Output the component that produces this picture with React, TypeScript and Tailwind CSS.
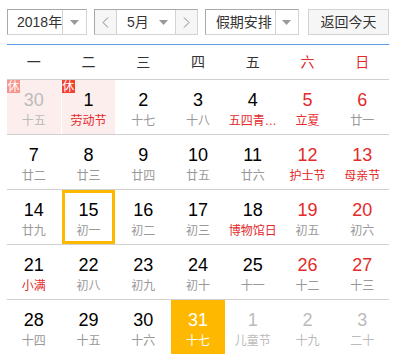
import React from 'react';

type Day = {
  n: number;
  sub: string;
  weekend?: boolean;
  festival?: boolean;
  other?: boolean;
  rest?: boolean;
  selected?: boolean;
  today?: boolean;
};

const weeks: Day[][] = [
  [
    { n: 30, sub: '十五', other: true, rest: true },
    { n: 1, sub: '劳动节', festival: true, rest: true },
    { n: 2, sub: '十七' },
    { n: 3, sub: '十八' },
    { n: 4, sub: '五四青…', festival: true },
    { n: 5, sub: '立夏', weekend: true, festival: true },
    { n: 6, sub: '廿一', weekend: true },
  ],
  [
    { n: 7, sub: '廿二' },
    { n: 8, sub: '廿三' },
    { n: 9, sub: '廿四' },
    { n: 10, sub: '廿五' },
    { n: 11, sub: '廿六' },
    { n: 12, sub: '护士节', weekend: true, festival: true },
    { n: 13, sub: '母亲节', weekend: true, festival: true },
  ],
  [
    { n: 14, sub: '廿九' },
    { n: 15, sub: '初一', selected: true },
    { n: 16, sub: '初二' },
    { n: 17, sub: '初三' },
    { n: 18, sub: '博物馆日', festival: true },
    { n: 19, sub: '初五', weekend: true },
    { n: 20, sub: '初六', weekend: true },
  ],
  [
    { n: 21, sub: '小满', festival: true },
    { n: 22, sub: '初八' },
    { n: 23, sub: '初九' },
    { n: 24, sub: '初十' },
    { n: 25, sub: '十一' },
    { n: 26, sub: '十二', weekend: true },
    { n: 27, sub: '十三', weekend: true },
  ],
  [
    { n: 28, sub: '十四' },
    { n: 29, sub: '十五' },
    { n: 30, sub: '十六' },
    { n: 31, sub: '十七', today: true },
    { n: 1, sub: '儿童节', other: true },
    { n: 2, sub: '十九', other: true },
    { n: 3, sub: '二十', other: true },
  ],
];

const Caret = () => (
  <svg width="9" height="5" viewBox="0 0 9 5" className="block shrink-0">
    <path d="M0 0h9L4.5 5z" fill="#999" />
  </svg>
);

const Chevron = ({ dir }: { dir: 'l' | 'r' }) => (
  <svg width="7" height="11" viewBox="0 0 7 11" className="block">
    <path
      d={dir === 'l' ? 'M6 0.5L1 5.5l5 5' : 'M1 0.5l5 5-5 5'}
      fill="none"
      stroke="#888"
      strokeWidth="1"
    />
  </svg>
);

const boxBorder = 'border border-t-[#a9a9a9] border-l-[#a9a9a9] border-r-[#d3d3d3] border-b-[#d3d3d3]';

function DayCell({ d }: { d: Day }) {
  let numColor = d.weekend ? 'text-[#e42a2a]' : 'text-black';
  let subColor = d.festival ? 'text-[#e42a2a]' : 'text-[#999]';
  if (d.other) {
    numColor = 'text-[#bbb]';
    subColor = 'text-[#bbb]';
  }
  if (d.today) {
    numColor = 'text-white';
    subColor = 'text-white';
  }
  const bg = d.today ? 'bg-[#ffb800]' : d.rest ? 'bg-[#fdeeee]' : 'bg-white';
  const ring = d.selected ? 'border-[3px] border-[#ffb800] pt-[7px]' : 'pt-[10px]';

  return (
    <div className={`relative h-[54px] flex flex-col items-center ${bg} ${ring}`}>
      {d.rest && (
        <span
          className={`absolute left-0 top-0 w-[13px] h-[13px] flex items-center justify-center text-[12px] leading-none text-white ${
            d.other ? 'bg-[#f7958c]' : 'bg-[#f2412f]'
          }`}
        >
          休
        </span>
      )}
      <span className={`text-[18px] leading-[20px] ${numColor}`}>{d.n}</span>
      <span className={`mt-[3px] text-[12px] leading-[16px] whitespace-nowrap ${subColor}`}>{d.sub}</span>
    </div>
  );
}

export default function App() {
  return (
    <div
      className="w-[396px] h-[359px] bg-white px-[7px] pt-[9px] text-[#333] overflow-hidden"
      style={{ fontFamily: '"Liberation Sans", "Noto Sans CJK SC", sans-serif' }}
    >
      {/* toolbar */}
      <div className="flex h-[26px] text-[14px] whitespace-nowrap">
        <div className={`flex w-[80px] bg-white ${boxBorder}`}>
          <span className="flex-1 pl-[9px] flex items-center">2018年</span>
          <span className="w-[24px] shrink-0 border-l border-[#d3d3d3] flex items-center justify-center">
            <Caret />
          </span>
        </div>

        <div className={`ml-[7px] flex w-[105px] ${boxBorder}`}>
          <span className="w-[22px] bg-[#f6f6f6] border-r border-[#d3d3d3] flex items-center justify-center">
            <Chevron dir="l" />
          </span>
          <span className="flex-1 bg-white flex items-center pl-[10px] pr-[7px] justify-between">
            5月
            <Caret />
          </span>
          <span className="w-[22px] bg-[#f6f6f6] border-l border-[#d3d3d3] flex items-center justify-center">
            <Chevron dir="r" />
          </span>
        </div>

        <div className={`ml-[7px] flex w-[95px] bg-white ${boxBorder}`}>
          <span className="flex-1 pl-[10px] flex items-center">假期安排</span>
          <span className="w-[23px] shrink-0 border-l border-[#d3d3d3] flex items-center justify-center">
            <Caret />
          </span>
        </div>

        <button className="ml-[9px] w-[82px] bg-[#f6f6f6] border border-[#d3d3d3] flex items-center justify-center text-[#333]">
          返回今天
        </button>
      </div>

      {/* weekday header */}
      <div className="mt-[9px] border-t border-[#5b9de6] grid grid-cols-7 gap-x-px h-[35px] items-center text-[14px] text-center">
        {['一', '二', '三', '四', '五', '六', '日'].map((w, i) => (
          <span key={w} className={i >= 5 ? 'text-[#e42a2a]' : 'text-[#333]'}>
            {w}
          </span>
        ))}
      </div>

      {/* day grid */}
      {weeks.map((row, r) => (
        <div key={r} className="border-t border-[#d0d0d0] grid grid-cols-7 gap-x-px">
          {row.map((d, i) => (
            <DayCell key={i} d={d} />
          ))}
        </div>
      ))}
    </div>
  );
}
